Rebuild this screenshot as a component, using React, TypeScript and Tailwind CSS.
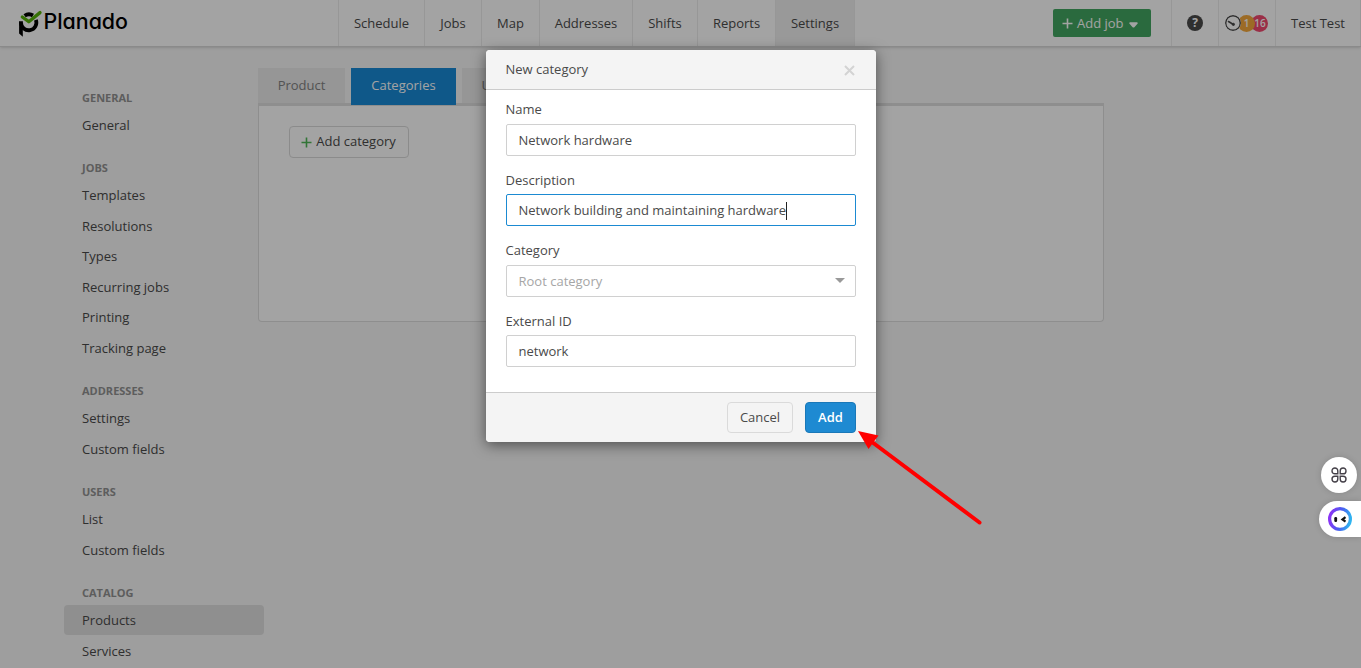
import type { ReactNode } from "react";

interface NavGroup {
  title: string;
  items: string[];
}

const topNav = [
  { label: "Schedule", width: "w-[86px]" },
  { label: "Jobs", width: "w-[57px]" },
  { label: "Map", width: "w-[58px]" },
  { label: "Addresses", width: "w-[93px]" },
  { label: "Shifts", width: "w-[65px]" },
  { label: "Reports", width: "w-[78px]" },
  { label: "Settings", width: "w-[79px]", active: true },
];

const groups: NavGroup[] = [
  { title: "General", items: ["General"] },
  {
    title: "Jobs",
    items: [
      "Templates",
      "Resolutions",
      "Types",
      "Recurring jobs",
      "Printing",
      "Tracking page",
    ],
  },
  { title: "Addresses", items: ["Settings", "Custom fields"] },
  { title: "Users", items: ["List", "Custom fields"] },
  { title: "Catalog", items: ["Products", "Services"] },
];

const Logo = () => (
  <svg width="114" height="32" viewBox="0 0 114 32" className="ml-4 mt-2">
    <g fill="none" stroke="#000" strokeWidth="3.800">
      <path d="M8.600 7.800a7.700 7.700 0 0 1 8.400-.3" />
      <path d="M5 13.200v1.300a7.700 7.700 0 1 0 14.900-2.700" />
    </g>
    <path d="M3.100 13v12.600l3.700 3.200V19z" fill="#000" />
    <path
      d="M6.300 9l6.500 4.700L24 4.600"
      fill="none"
      stroke="#55b307"
      strokeWidth="3.300"
      strokeLinecap="round"
      strokeLinejoin="round"
    />
    <text
      x="27.500"
      y="21.300"
      textLength="84.500"
      lengthAdjust="spacingAndGlyphs"
      fill="#000"
      fontFamily="Inter, sans-serif"
      fontSize="21.500"
      fontWeight="500"
      style={{ fontFeatureSettings: '"cv11"' }}
    >
      Planado
    </text>
  </svg>
);

const Plus = ({ className }: { className: string }) => (
  <svg width="11" height="11" viewBox="0 0 11 11" className={className}>
    <path d="M5.500 0.500v10M0.500 5.500h10" stroke="currentColor" strokeWidth="1.600" />
  </svg>
);

const Header = () => (
  <header className="flex h-[47px] border-b border-[#d8d8d8] bg-white shadow-sm">
    <div className="w-[338px] shrink-0">
      <Logo />
    </div>
    <nav className="flex">
      {topNav.map((n) => (
        <a
          key={n.label}
          className={`flex items-center justify-center border-l border-[#ececec] pt-px ${n.width} ${
            n.active ? "bg-[#f0f0f0]" : ""
          }`}
        >
          {n.label}
        </a>
      ))}
      <div className="border-l border-[#ececec]" />
    </nav>
    <div className="ml-auto flex">
      <button className="mt-[9px] mr-5 flex h-7 w-[98px] items-center rounded-xs bg-[#43a761] pl-[8.500px] text-white">
        <Plus className="mr-[4.500px] text-white" />
        <span className="pt-px">Add job</span>
        <svg width="9" height="6" viewBox="0 0 10 6" className="mt-[3px] ml-[5.500px]">
          <path
            d="M1.300 0h7.400c1 0 1.400 1 .7 1.700L6 5.400a1.400 1.400 0 0 1-2 0L.6 1.700C-.1 1 .3 0 1.300 0z"
            fill="currentColor"
          />
        </svg>
      </button>
      <div className="flex w-[47px] items-center justify-center border-l border-[#ececec]">
        <span className="flex size-4 items-center justify-center rounded-full bg-[#4a4a4a] text-xs font-bold text-white">
          ?
        </span>
      </div>
      <div className="flex w-[57px] items-center border-l border-[#ececec] pl-1.5 text-[10px] font-semibold text-white">
        <svg
          width="16"
          height="16"
          viewBox="0 0 16 16"
          fill="none"
          stroke="#4a4a4a"
          className="relative z-20 rounded-full bg-white"
        >
          <circle cx="8" cy="8" r="7.300" strokeWidth="1.400" />
          <path d="M3.500 6.500l4.500 2.700" strokeWidth="1.600" strokeLinecap="round" />
          <circle cx="8.400" cy="9.400" r="1.100" fill="#4a4a4a" />
        </svg>
        <span className="relative z-10 -ml-[3px] flex size-[17px] items-center justify-center rounded-full bg-[#f5a83c]">
          1
        </span>
        <span className="-ml-1 flex size-[17px] items-center justify-center rounded-full bg-[#f1496f] pl-px">
          16
        </span>
      </div>
      <div className="flex w-[86px] items-center justify-center border-x border-[#ececec] pt-px">
        Test Test
      </div>
    </div>
  </header>
);

const Sidebar = () => (
  <aside className="w-[200px] shrink-0 pt-[40.700px]">
    {groups.map((g) => (
      <div key={g.title} className="mb-[18.500px]">
        <h3 className="mb-0.5 pl-[18px] text-[11px] leading-5 font-bold text-[#929292] uppercase">
          {g.title}
        </h3>
        {g.items.map((item) => (
          <a
            key={item}
            className={`mb-[0.500px] block h-[30px] rounded pl-[18px] leading-[30px] ${
              item === "Products" ? "bg-[#e0e0e0]" : ""
            }`}
          >
            {item}
          </a>
        ))}
      </div>
    ))}
  </aside>
);

const Content = () => (
  <main className="-ml-1.5 w-[846px] pt-[21px]">
    <div className="flex h-[38px] gap-1.5 border-b-[3px] border-[#dedede] text-[#828282]">
      <div className="h-[35px] w-[87px] bg-[#ebebeb] text-center leading-[35px]">
        Product
      </div>
      <div className="h-[37px] w-[105px] bg-[#188ad6] text-center leading-[35px] font-medium text-white">
        Categories
      </div>
      <div className="h-[35px] w-[69px] bg-[#ebebeb] pl-[19.500px] leading-[35px]">
        Units
      </div>
    </div>
    <div className="h-[216px] rounded-b-sm border border-t-0 border-[#dedede] bg-white pt-5 pl-[30px]">
      <button className="flex h-8 w-[120px] items-center justify-center rounded border border-[#dadada] pr-px">
        <Plus className="mr-1 text-[#4fb857]" />
        Add category
      </button>
    </div>
  </main>
);

const Field = ({
  label,
  focused,
  children,
}: {
  label: string;
  focused?: boolean;
  children: ReactNode;
}) => (
  <div className="h-[70.500px]">
    <label className="-ml-[0.500px] block h-[33.900px] pt-[10.100px] leading-[18px]">
      {label}
    </label>
    <div
      className={`flex h-8 items-center rounded-xs border pt-[0.900px] pr-3 pl-[11.500px] ${
        focused ? "border-[#1b8ad2]" : "border-[#d0d0d0]"
      }`}
    >
      {children}
    </div>
  </div>
);

const Dialog = () => (
  <div className="absolute top-[50px] left-[486px] flex h-[392px] w-[390px] flex-col overflow-hidden rounded bg-white shadow-[0_3px_14px_rgba(0,0,0,0.5)]">
    <div className="flex h-10 items-center justify-between border-b border-[#cccccc] bg-[#f4f4f4] pr-[21px] pl-[19.500px]">
      <span>New category</span>
      <svg width="11" height="11" viewBox="0 0 11 11" className="mt-px">
        <path d="M1 1l9 9M10 1L1 10" stroke="#d3d3d3" strokeWidth="2" />
      </svg>
    </div>
    <div className="h-[302px] px-5">
      <Field label="Name">Network hardware</Field>
      <Field label="Description" focused>
        Network building and maintaining hardware
        <span className="h-[18px] w-px bg-[#222222]" />
      </Field>
      <Field label="Category">
        <span className="text-[#a6a6a6]">Root category</span>
        <svg width="10" height="5" viewBox="0 0 10 5" className="mr-[-2px] mb-0.5 ml-auto">
          <path d="M0 0h10L5 5z" fill="#999999" />
        </svg>
      </Field>
      <Field label="External ID">network</Field>
    </div>
    <div className="flex h-[50px] items-start justify-end gap-3 border-t border-[#cccccc] bg-[#f4f4f4] pt-[9px] pr-5">
      <button className="h-[31px] w-[66px] rounded border border-[#dadada]">
        Cancel
      </button>
      <button className="h-[31px] w-[51px] rounded border border-[#1a78b8] bg-[#1e8ad2] font-semibold text-white">
        Add
      </button>
    </div>
  </div>
);

const Widgets = () => (
  <div className="absolute top-[457px] right-0 flex w-[42px] flex-col gap-2">
    <div className="ml-0.5 flex size-9 items-center justify-center rounded-full bg-white shadow-[0_0_6px_rgba(0,0,0,0.15)]">
      <svg width="16" height="16" viewBox="0 0 16 16" fill="none" stroke="#444048" strokeWidth="1.400">
        <path d="M6.800 6.800H3.900A2.900 2.900 0 1 1 6.800 3.900z" />
        <path d="M9.200 6.800V3.900a2.900 2.900 0 1 1 2.900 2.900z" />
        <path d="M6.800 9.200v2.900a2.900 2.900 0 1 1-2.900-2.900z" />
        <path d="M9.200 9.200h2.900a2.900 2.900 0 1 1-2.900 2.900z" />
      </svg>
    </div>
    <div className="flex h-9 items-center rounded-l-full bg-white pl-[9px] shadow-[0_0_6px_rgba(0,0,0,0.15)]">
      <svg width="24" height="24" viewBox="0 0 24 24" fill="none">
        <defs>
          <linearGradient id="ring" x1="0" y1="0.400" x2="1" y2="0.600">
            <stop offset="0" stopColor="#8a35f5" />
            <stop offset="0.500" stopColor="#4a5cf0" />
            <stop offset="1" stopColor="#2fb4f0" />
          </linearGradient>
        </defs>
        <circle cx="12" cy="12" r="10.400" stroke="url(#ring)" strokeWidth="3.200" />
        <rect x="6.300" y="10" width="2.800" height="5" rx="1.200" fill="#111111" />
        <path d="M17.500 10.200l-3 2.200 3 2.200" stroke="#111111" strokeWidth="2.200" />
      </svg>
    </div>
  </div>
);

export default function App() {
  return (
    <div className="relative h-[668px] w-[1361px] overflow-hidden bg-[#f7f7f7] font-['Open_Sans',sans-serif] text-[13px] text-[#4a4a4a]">
      <Header />
      <div className="flex pl-16">
        <Sidebar />
        <Content />
      </div>
      <div className="absolute inset-0 z-30 bg-black/36" />
      <div className="absolute inset-0 z-40">
        <Dialog />
        <Widgets />
        <svg
          width="130"
          height="100"
          viewBox="0 0 130 100"
          className="pointer-events-none absolute top-[428px] left-[856px]"
        >
          <path d="M14 12.500l109.500 82" stroke="#ff0000" strokeWidth="4" strokeLinecap="round" />
          <path d="M2 3l20.500 4.500L12.500 21z" fill="#ff0000" />
        </svg>
      </div>
    </div>
  );
}
